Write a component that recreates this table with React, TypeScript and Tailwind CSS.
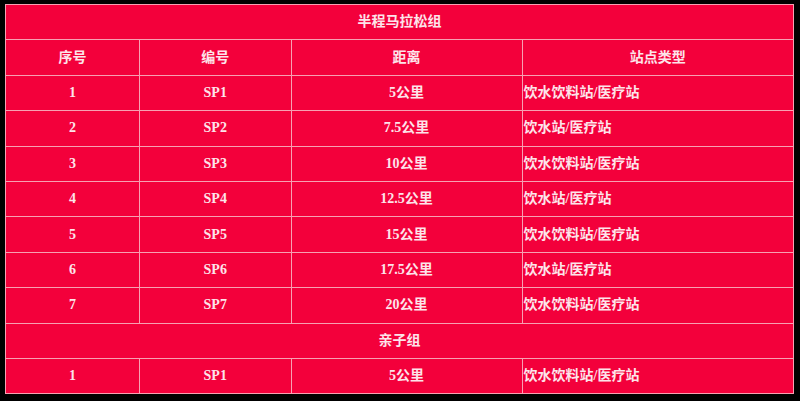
const rows = [
  { no: "1", code: "SP1", dist: "5公里", type: "饮水饮料站/医疗站" },
  { no: "2", code: "SP2", dist: "7.5公里", type: "饮水站/医疗站" },
  { no: "3", code: "SP3", dist: "10公里", type: "饮水饮料站/医疗站" },
  { no: "4", code: "SP4", dist: "12.5公里", type: "饮水站/医疗站" },
  { no: "5", code: "SP5", dist: "15公里", type: "饮水饮料站/医疗站" },
  { no: "6", code: "SP6", dist: "17.5公里", type: "饮水站/医疗站" },
  { no: "7", code: "SP7", dist: "20公里", type: "饮水饮料站/医疗站" },
];

const kids = [{ no: "1", code: "SP1", dist: "5公里", type: "饮水饮料站/医疗站" }];

const cell = "border border-[#f7a0b2] text-center align-middle p-0";

function Row({ no, code, dist, type }: { no: string; code: string; dist: string; type: string }) {
  return (
    <tr className="h-[35.4px]">
      <td className={cell}>{no}</td>
      <td className={cell}>{code}</td>
      <td className={cell}>{dist}</td>
      <td className="border border-[#f7a0b2] text-left align-middle pl-[1px]">{type}</td>
    </tr>
  );
}

function GroupRow({ title }: { title: string }) {
  return (
    <tr className="h-[35.4px]">
      <td colSpan={4} className={cell}>
        {title}
      </td>
    </tr>
  );
}

export default function App() {
  return (
    <div className="w-[800px] h-[401px] bg-black pt-[4px] pl-[5px] overflow-hidden">
      <table
        className="w-[788px] border-collapse table-fixed bg-[#f3003b] text-[#fde4ea] text-[14px] font-bold leading-none"
        style={{ fontFamily: '"Liberation Serif", "Noto Sans CJK SC", serif' }}
      >
        <colgroup>
          <col className="w-[134px]" />
          <col className="w-[151.5px]" />
          <col className="w-[231px]" />
          <col className="w-[271.5px]" />
        </colgroup>
        <tbody>
          <GroupRow title="半程马拉松组" />
          <tr className="h-[35.4px]">
            <td className={cell}>序号</td>
            <td className={cell}>编号</td>
            <td className={cell}>距离</td>
            <td className={cell}>站点类型</td>
          </tr>
          {rows.map((r) => (
            <Row key={r.code} {...r} />
          ))}
          <GroupRow title="亲子组" />
          {kids.map((r) => (
            <Row key={"k" + r.code} {...r} />
          ))}
        </tbody>
      </table>
    </div>
  );
}
